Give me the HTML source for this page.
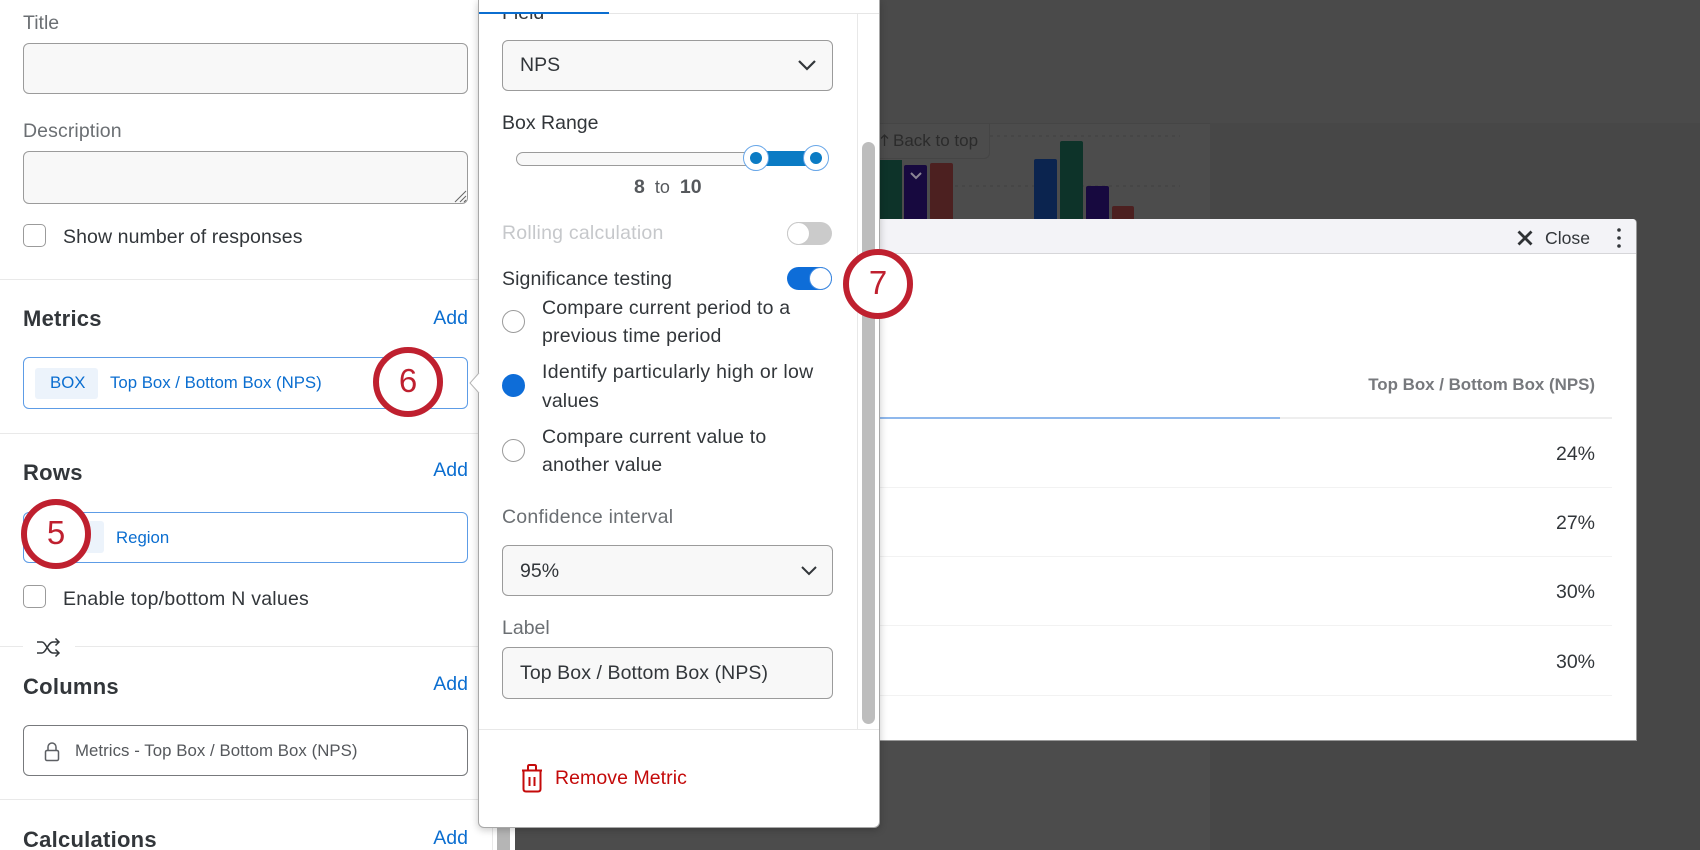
<!DOCTYPE html>
<html><head><meta charset="utf-8">
<style>
html,body{margin:0;padding:0;width:1700px;height:850px;overflow:hidden;background:#474747}
body{position:relative;font-family:"Liberation Sans",sans-serif;color:#32363a;filter:blur(.3px)}
.a{position:absolute}
.t{position:absolute;height:30px;line-height:30px;font-size:19.5px;white-space:nowrap;margin-top:1px}
.s{font-size:16.8px}
.b{font-weight:bold}
.h{font-size:22px;letter-spacing:.25px}
.g{color:#6b6f73}
.blue{color:#0b6ed0}
.add{position:absolute;right:1232px;height:30px;line-height:30px;font-size:19.5px;color:#0b6ed0}
.field{position:absolute;box-sizing:border-box;background:#f8f8f8;border:1px solid #9b9b9b;border-radius:6px}
.box{position:absolute;box-sizing:border-box;background:#fff;border:1.5px solid #5d9ce6;border-radius:6px}
.chip{position:absolute;background:#ecf3fb;border-radius:3px}
.cb{position:absolute;box-sizing:border-box;width:23px;height:23px;background:#fff;border:1px solid #9b9b9b;border-radius:5px}
.hr{position:absolute;height:1px;background:#e9e9e9}
.rad{position:absolute;box-sizing:border-box;width:23px;height:23px;border-radius:50%;border:1px solid #9b9b9b;background:#fff;left:502px}
.ring{position:absolute;box-sizing:border-box;width:70px;height:70px;border-radius:50%;border:6px solid #bf202f;background:#fff;color:#bf202f;font-size:33px;line-height:56px;text-align:center;z-index:10}
.bar{position:absolute;border-radius:2px 2px 0 0}
.rl{position:absolute;left:880px;width:732px;height:1px;background:#f2f2f2}
.val{position:absolute;right:105px;height:30px;line-height:30px;font-size:19.5px}
</style></head>
<body>

<!-- dark background -->
<div class="a" style="left:515px;top:0;width:1185px;height:123px;background:#4a4a4a"></div>
<div class="a" style="left:515px;top:123px;width:695px;height:727px;background:#4c4c4c"></div>
<div class="a" style="left:515px;top:123px;width:1185px;height:1px;background:#454545"></div>
<div class="a" style="left:1210px;top:123px;width:490px;height:727px;background:#474747"></div>

<!-- chart -->
<svg class="a" style="left:880px;top:123px" width="330" height="100">
<line x1="110" y1="13" x2="300" y2="13" stroke="#444" stroke-width="1.5" stroke-dasharray="3 4"/>
<line x1="75" y1="63" x2="300" y2="63" stroke="#444" stroke-width="1.5" stroke-dasharray="3 4"/>
</svg>
<div class="a" style="left:880px;top:123px;width:110px;height:36px;border:1px solid #454545;border-top:0;border-left:0;border-radius:0 0 6px 0;box-sizing:border-box"></div>
<svg class="a" style="left:880px;top:133px" width="10" height="14" fill="none" stroke="#2b2b2b" stroke-width="1.3"><path d="M4.5 13V2M1 5.5L4.5 2L8 5.5"/></svg>
<div class="t" style="left:893px;top:125px;font-size:17px;color:#2b2b2b">Back to top</div>
<div class="bar" style="left:880px;top:160px;width:22px;height:59px;background:#0d3329;border-radius:0"></div>
<div class="bar" style="left:904px;top:165px;width:23px;height:54px;background:#17093f"></div>
<svg class="a" style="left:909px;top:171px" width="14" height="10"><path d="M2 2L7 7L12 2" fill="none" stroke="#8c8595" stroke-width="2"/></svg>
<div class="bar" style="left:930px;top:163px;width:23px;height:56px;background:#4c2020"></div>
<div class="bar" style="left:1034px;top:159px;width:23px;height:60px;background:#0b244f"></div>
<div class="bar" style="left:1060px;top:141px;width:23px;height:78px;background:#0d3329"></div>
<div class="bar" style="left:1086px;top:186px;width:23px;height:33px;background:#17093f"></div>
<div class="bar" style="left:1112px;top:206px;width:22px;height:13px;background:#4c2020"></div>

<!-- modal -->
<div class="a" style="left:880px;top:219px;width:757px;height:522px;background:#fff;border-right:1px solid #999;border-bottom:1px solid #999;border-radius:0 4px 0 0;box-sizing:border-box"></div>
<div class="a" style="left:880px;top:219px;width:756px;height:35px;background:#f3f3f7;border-bottom:1px solid #d6d6d9;box-sizing:border-box;border-radius:0 4px 0 0"></div>
<svg class="a" style="left:1516px;top:229px" width="18" height="18"><path d="M2.5 2.5L15.5 15.5M15.5 2.5L2.5 15.5" stroke="#2f3235" stroke-width="2.8" fill="none"/></svg>
<div class="t" style="left:1545px;top:222px;font-size:17.6px">Close</div>
<svg class="a" style="left:1615px;top:227px" width="8" height="22"><circle cx="4" cy="3" r="1.8" fill="#32363a"/><circle cx="4" cy="11" r="1.8" fill="#32363a"/><circle cx="4" cy="19" r="1.8" fill="#32363a"/></svg>
<div class="val b" style="top:370px;font-size:16.9px;color:#77797d">Top Box / Bottom Box (NPS)</div>
<div class="a" style="left:880px;top:417px;width:732px;height:2px;background:#eeeeee"></div>
<div class="a" style="left:880px;top:417px;width:400px;height:2px;background:#8fb8ec"></div>
<div class="val" style="top:439px">24%</div>
<div class="rl" style="top:487px"></div>
<div class="val" style="top:508px">27%</div>
<div class="rl" style="top:556px"></div>
<div class="val" style="top:577px">30%</div>
<div class="rl" style="top:625px"></div>
<div class="val" style="top:647px">30%</div>
<div class="rl" style="top:695px"></div>

<!-- left panel -->
<div class="a" style="left:0;top:0;width:478px;height:850px;background:#fff"></div>
<div class="a" style="left:478px;top:0;width:37px;height:850px;background:#fff"></div>
<div class="a" style="left:497px;top:820px;width:13px;height:30px;background:#b5b5b5"></div>
<div class="a" style="left:492px;top:820px;width:1px;height:30px;background:#e9e9e9"></div>

<div class="t g" style="left:23px;top:7px">Title</div>
<div class="field" style="left:23px;top:43px;width:445px;height:51px"></div>
<div class="t g" style="left:23px;top:115px;letter-spacing:.1px">Description</div>
<div class="field" style="left:23px;top:151px;width:445px;height:53px"></div>
<svg class="a" style="left:454px;top:190px" width="13" height="13"><path d="M1 12L12 1M6 12L12 6M10 12L12 10" stroke="#666" stroke-width="1" fill="none"/></svg>
<div class="cb" style="left:23px;top:224px"></div>
<div class="t" style="left:63px;top:221px;letter-spacing:.09px">Show number of responses</div>
<div class="hr" style="left:0;top:279px;width:478px"></div>

<div class="t b h" style="left:23px;top:303px">Metrics</div>
<div class="add" style="top:303px">Add</div>
<div class="box" style="left:23px;top:357px;width:445px;height:52px"></div>
<div class="chip" style="left:35px;top:368px;width:63px;height:31px"></div>
<div class="t s blue" style="left:50px;top:367px">BOX</div>
<div class="t s blue" style="left:110px;top:367px">Top Box / Bottom Box (NPS)</div>
<div class="hr" style="left:0;top:433px;width:478px"></div>

<div class="t b h" style="left:23px;top:457px">Rows</div>
<div class="add" style="top:455px">Add</div>
<div class="box" style="left:23px;top:512px;width:445px;height:51px"></div>
<div class="chip" style="left:35px;top:521px;width:69px;height:32px"></div>
<div class="t s blue" style="left:116px;top:522px">Region</div>
<div class="cb" style="left:23px;top:585px"></div>
<div class="t" style="left:63px;top:583px;letter-spacing:.25px">Enable top/bottom N values</div>
<div class="hr" style="left:0;top:646px;width:23px"></div>
<div class="hr" style="left:75px;top:646px;width:403px"></div>
<svg class="a" style="left:36px;top:637px" width="25" height="22" fill="none" stroke="#32363a" stroke-width="1.5"><path d="M1 5H6C10 5 12 16 17 16H23"/><path d="M1 16H6C10 16 12 5 17 5H23"/><path d="M19.5 1.5L23 5L19.5 8.5"/><path d="M19.5 12.5L23 16L19.5 19.5"/></svg>

<div class="t b h" style="left:23px;top:671px">Columns</div>
<div class="add" style="top:669px">Add</div>
<div class="a" style="left:23px;top:725px;width:445px;height:51px;box-sizing:border-box;border:1px solid #77797c;border-radius:6px;background:#fff"></div>
<svg class="a" style="left:44px;top:741px" width="17" height="21" fill="none" stroke="#5c5f63" stroke-width="1.5"><rect x="1.5" y="9.5" width="13" height="10" rx="1.5"/><path d="M4 9.5V6a4 4 0 0 1 8 0V9.5"/></svg>
<div class="t s" style="left:75px;top:735px;color:#55585c;letter-spacing:.06px">Metrics - Top Box / Bottom Box (NPS)</div>
<div class="hr" style="left:0;top:799px;width:478px"></div>
<div class="t b h" style="left:23px;top:824px">Calculations</div>
<div class="add" style="top:823px">Add</div>

<!-- popover -->
<div class="a" style="left:478px;top:0;width:402px;height:828px;background:#fff;border:1px solid #a8a8a8;border-top:0;border-radius:0 0 6px 6px;box-sizing:border-box;box-shadow:0 2px 8px rgba(0,0,0,.22)"></div>
<svg class="a" style="left:469px;top:371px;z-index:2" width="11" height="24"><path d="M10 2L1 12L10 22" fill="#fff" stroke="#b5b5b5" stroke-width="1"/><rect x="9.5" y="3" width="2" height="18" fill="#fff"/></svg>
<div class="t g" style="left:502px;top:-3px;color:#32363a">Field</div>
<div class="a" style="left:479px;top:0;width:400px;height:13px;background:#fff"></div>
<div class="a" style="left:479px;top:13px;width:400px;height:1px;background:#e6e6e6"></div>
<div class="a" style="left:479px;top:12px;width:130px;height:2px;background:#0b6ed0"></div>
<div class="a" style="left:857px;top:14px;width:1px;height:715px;background:#e8e8e8"></div>
<div class="a" style="left:862px;top:142px;width:13px;height:582px;background:#bdbdbd;border-radius:7px"></div>

<div class="field" style="left:502px;top:40px;width:331px;height:51px"></div>
<div class="t" style="left:520px;top:49px">NPS</div>
<svg class="a" style="left:797px;top:58px" width="20" height="14"><path d="M2 3L10 11L18 3" fill="none" stroke="#32363a" stroke-width="2.2"/></svg>
<div class="t" style="left:502px;top:107px">Box Range</div>

<div class="a" style="left:516px;top:152px;width:250px;height:14px;box-sizing:border-box;background:#f8f8f8;border:1px solid #9b9b9b;border-radius:7px"></div>
<div class="a" style="left:756px;top:151px;width:60px;height:15px;background:#0b7bc4"></div>
<div class="a" style="left:743px;top:145px;width:26px;height:26px;box-sizing:border-box;border-radius:50%;background:#fff;border:1px solid #67a6e8"></div>
<div class="a" style="left:750px;top:152px;width:12px;height:12px;border-radius:50%;background:#0b7bc4"></div>
<div class="a" style="left:803px;top:145px;width:26px;height:26px;box-sizing:border-box;border-radius:50%;background:#fff;border:1px solid #67a6e8"></div>
<div class="a" style="left:810px;top:152px;width:12px;height:12px;border-radius:50%;background:#0b7bc4"></div>
<div class="t" style="left:634px;top:171px;color:#55585c;font-size:18px"><b style="font-size:19.5px">8</b>&nbsp; to &nbsp;<b style="font-size:19.5px">10</b></div>

<div class="t" style="left:502px;top:217px;color:#c6c8cb;letter-spacing:.23px">Rolling calculation</div>
<div class="a" style="left:787px;top:222px;width:45px;height:23px;border-radius:12px;background:#cbcbcb"></div>
<div class="a" style="left:787px;top:222px;width:23px;height:23px;box-sizing:border-box;border-radius:50%;background:#fff;border:1px solid #c9c9c9"></div>
<div class="t" style="left:502px;top:263px;letter-spacing:.1px">Significance testing</div>
<div class="a" style="left:787px;top:267px;width:45px;height:23px;border-radius:12px;background:#0e6dd8"></div>
<div class="a" style="left:809px;top:267px;width:23px;height:23px;box-sizing:border-box;border-radius:50%;background:#fff;border:1px solid #3f89e0"></div>

<div class="rad" style="top:310px"></div>
<div class="t" style="left:542px;top:292px;letter-spacing:.16px">Compare current period to a</div>
<div class="t" style="left:542px;top:320px;letter-spacing:.2px">previous time period</div>
<div class="rad" style="top:374px;background:#0e6dd8;border-color:#0e6dd8"></div>
<div class="t" style="left:542px;top:356px;letter-spacing:.28px">Identify particularly high or low</div>
<div class="t" style="left:542px;top:385px;letter-spacing:.1px">values</div>
<div class="rad" style="top:439px"></div>
<div class="t" style="left:542px;top:421px;letter-spacing:.18px">Compare current value to</div>
<div class="t" style="left:542px;top:449px;letter-spacing:.16px">another value</div>

<div class="t g" style="left:502px;top:501px;letter-spacing:.23px">Confidence interval</div>
<div class="field" style="left:502px;top:545px;width:331px;height:51px"></div>
<div class="t" style="left:520px;top:555px">95%</div>
<svg class="a" style="left:800px;top:564px" width="18" height="13"><path d="M2 3L9 10L16 3" fill="none" stroke="#32363a" stroke-width="2"/></svg>
<div class="t g" style="left:502px;top:612px">Label</div>
<div class="field" style="left:502px;top:647px;width:331px;height:52px"></div>
<div class="t" style="left:520px;top:657px;letter-spacing:.08px">Top Box / Bottom Box (NPS)</div>

<div class="a" style="left:479px;top:729px;width:400px;height:1px;background:#e8e8e8"></div>
<svg class="a" style="left:520px;top:763px" width="24" height="30" fill="none" stroke="#c40a0a" stroke-width="2"><path d="M2 7.5H22"/><path d="M8 7V3.5Q8 2 9.5 2H14.5Q16 2 16 3.5V7"/><path d="M3.5 8V26Q3.5 28.5 6 28.5H18Q20.5 28.5 20.5 26V8"/><path d="M9.5 14V23M14.5 14V23"/></svg>
<div class="t" style="left:555px;top:762px;color:#c40a0a;letter-spacing:.06px">Remove Metric</div>

<!-- number rings -->
<div class="ring" style="left:373px;top:347px">6</div>
<div class="ring" style="left:21px;top:499px">5</div>
<div class="ring" style="left:843px;top:249px">7</div>

</body></html>
